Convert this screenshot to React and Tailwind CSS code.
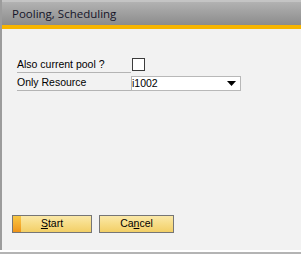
import React from 'react';

const Button = ({ children, accent, className = '' }) => (
  <button
    className={`relative flex h-[18px] items-center justify-center border border-[#767676] bg-gradient-to-b from-[#fbe8a8] via-[#f7dc86] to-[#f2cf66] text-[10.5px] text-black ${className}`}
  >
    {accent && (
      <span className="absolute left-0 top-0 h-full w-[8px] bg-gradient-to-b from-[#f8c844] to-[#ef9417]" />
    )}
    <span className="relative">{children}</span>
  </button>
);

const App = () => {
  return (
    <div
      className="flex h-[254px] w-[301px] flex-col bg-[#f2f2f2]"
      style={{ fontFamily: '"Liberation Sans", Arial, sans-serif' }}
    >
      <div className="flex flex-1 flex-col border-l-2 border-[#9c9c9c]">
        {/* Title bar */}
        <div className="flex h-[25px] items-center border-t-2 border-[#c4c4c4] bg-gradient-to-b from-[#b2b2b2] to-[#8c8c8c] pl-[10px]">
          <span
            className="text-[11.5px] text-[#141428]"
            style={{ fontFamily: '"Open Sans", "Noto Sans", sans-serif' }}
          >
            Pooling, Scheduling
          </span>
        </div>
        <div className="h-[4px] bg-[#f7b500]" />

        {/* Form */}
        <div className="flex flex-col gap-[3px] pl-[15px] pt-[29px]">
          <div className="flex h-[15px] items-end">
            <div className="flex h-full w-[114px] items-center border-b border-[#b4b4b4] text-[10.5px] text-black">
              Also current pool ?
            </div>
            <div className="mb-[2px] ml-[1px] h-[13px] w-[13px] border border-[#3c3c3c] bg-white" />
          </div>
          <div className="flex h-[15px] items-end">
            <div className="flex h-full w-[114px] items-center border-b border-[#b4b4b4] text-[10.5px] text-black">
              Only Resource
            </div>
            <div className="flex h-[15px] w-[110px] items-center justify-between border border-[#b8b8b8] bg-white pr-[4px]">
              <span className="text-[10.5px] text-black">i1002</span>
              <svg width="9" height="5" viewBox="0 0 9 5">
                <path d="M0 0 H9 L4.5 5 Z" fill="#000" />
              </svg>
            </div>
          </div>
        </div>

        {/* Buttons */}
        <div className="mt-auto flex gap-[7px] pb-[17px] pl-[10px]">
          <Button accent className="w-[80px]">
            <span className="underline">S</span>tart
          </Button>
          <Button className="w-[75px]">
            Ca<span className="underline">n</span>cel
          </Button>
        </div>
      </div>
      <div className="h-[2px] bg-white" />
      <div className="h-[2px] bg-[#b4b4b4]" />
    </div>
  );
};

export default App;
